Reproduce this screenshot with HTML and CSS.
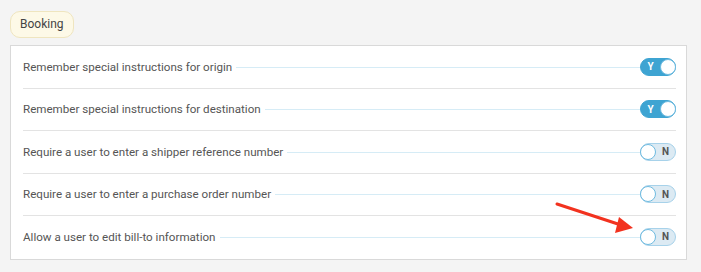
FILE: index.html
```html
<!DOCTYPE html>
<html>
<head>
    <title>Booking Settings</title>
    <link rel="stylesheet" href="styles.css">
</head>
<body>
    <div class="tag">Booking</div>
    <div class="panel">
        <div class="row">
            <span class="label">Remember special instructions for origin</span>
            <span class="leader"></span>
            <span class="toggle on"><b>Y</b><i class="knob"></i></span>
        </div>
        <div class="row">
            <span class="label">Remember special instructions for destination</span>
            <span class="leader"></span>
            <span class="toggle on"><b>Y</b><i class="knob"></i></span>
        </div>
        <div class="row">
            <span class="label">Require a user to enter a shipper reference number</span>
            <span class="leader"></span>
            <span class="toggle off"><i class="knob"></i><b>N</b></span>
        </div>
        <div class="row">
            <span class="label">Require a user to enter a purchase order number</span>
            <span class="leader"></span>
            <span class="toggle off"><i class="knob"></i><b>N</b></span>
        </div>
        <div class="row last">
            <span class="label">Allow a user to edit bill-to information</span>
            <span class="leader"></span>
            <span class="toggle off"><i class="knob"></i><b>N</b></span>
        </div>
        <svg class="arrow" width="90" height="40" viewBox="0 0 90 40">
            <line x1="2" y1="2" x2="66" y2="23" stroke="#f2321f" stroke-width="3" stroke-linecap="round"/>
            <polygon points="78,26 64,15 60,31" fill="#f2321f"/>
        </svg>
    </div>
</body>
</html>
```
FILE: styles.css
```css
body {
    font-family: Roboto, "Liberation Sans", sans-serif;
    margin: 0;
    padding: 11px 14px 13px 10px;
    background-color: #f4f4f4;
    color: #555;
}

.tag {
    display: inline-block;
    height: 25px;
    line-height: 25px;
    padding: 0 9px;
    font-size: 12px;
    color: #444;
    background-color: #fdf9e7;
    border: 1px solid #efe5bf;
    border-radius: 10px;
    margin-bottom: 7px;
}

.panel {
    position: relative;
    background-color: #fff;
    border: 1px solid #d9d9d9;
    padding: 0 10px 1.5px 12px;
}

.row {
    display: flex;
    align-items: center;
    height: 41.5px;
    border-bottom: 1px solid #e3e3e3;
    font-size: 11.6px;
}

.row.last {
    border-bottom: none;
}

.label {
    white-space: nowrap;
    padding-right: 4px;
}

.leader {
    flex: 1;
    height: 1px;
    background-color: #d6ecf6;
    margin-top: 1px;
}

.toggle {
    display: flex;
    align-items: center;
    width: 36px;
    height: 18px;
    border-radius: 9px;
    box-sizing: border-box;
    font-size: 10px;
}

.toggle b {
    flex: 1;
    text-align: center;
    font-weight: bold;
}

.toggle.on {
    background-color: #3ea4d2;
    border: 1px solid #3ea4d2;
    color: #fff;
}

.toggle.off {
    background-color: #dceaf3;
    border: 1px solid #a7d2ea;
    color: #555;
}

.knob {
    width: 16px;
    height: 16px;
    border-radius: 50%;
    background-color: #fff;
    box-sizing: border-box;
    border: 1px solid #6fbbe0;
}

.toggle.off .knob {
    margin-left: -1px;
}

.toggle.on .knob {
    margin-right: -1px;
}

.arrow {
    position: absolute;
    left: 544px;
    top: 156px;
}
```
